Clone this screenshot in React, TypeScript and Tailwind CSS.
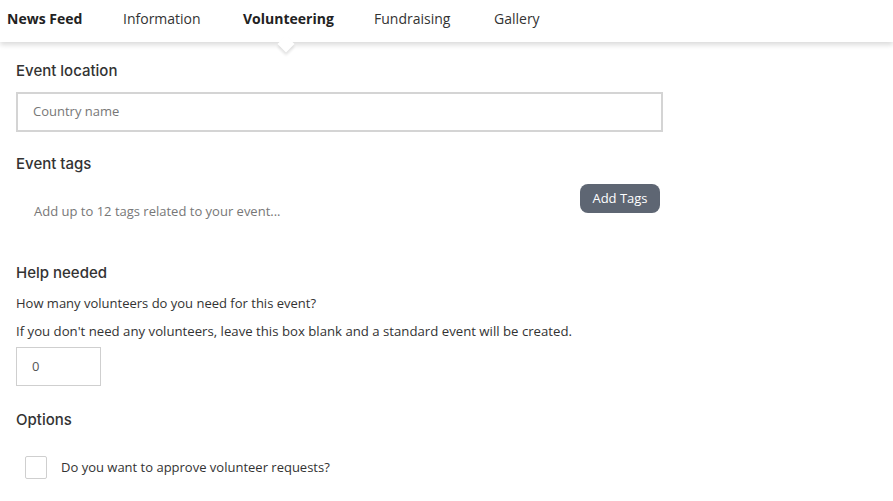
import React from "react";

const font = { fontFamily: '"Open Sans", "Liberation Sans", sans-serif' };

function Heading({ children, className = "" }: { children: React.ReactNode; className?: string }) {
  return (
    <div
      className={`text-[15px] font-medium text-[#333] leading-[18px] font-['Inter',sans-serif] ${className}`}
    >
      {children}
    </div>
  );
}

export default function App() {
  const tabs = [
    { label: "News Feed", bold: true, w: "w-[116px]" },
    { label: "Information", bold: false, w: "w-[120px]" },
    { label: "Volunteering", bold: true, w: "w-[131px]" },
    { label: "Fundraising", bold: false, w: "w-[120px]" },
    { label: "Gallery", bold: false, w: "w-[100px]" },
  ];
  return (
    <div className="w-[893px] h-[501px] bg-white overflow-hidden text-[#333]" style={font}>
      <div className="relative h-[42px] bg-white shadow-[0_3px_5px_rgba(0,0,0,0.14)] z-10">
        <div className="flex h-full items-center pl-[7px] pb-[6px]">
          {tabs.map((t) => (
            <div
              key={t.label}
              className={`${t.w} text-[14px] ${t.bold ? "font-bold text-[#222]" : "text-[#333]"}`}
            >
              {t.label}
            </div>
          ))}
        </div>
        <div className="absolute left-[280px] top-[38px] w-[12px] h-[12px] bg-white rotate-45 shadow-[2px_2px_3px_rgba(0,0,0,0.12)]" />
      </div>

      <div className="px-4 pt-[20px]">
        <Heading>Event location</Heading>
        <div className="mt-[12px] w-[647px] h-[40px] border-2 border-[#d4d4d4] flex items-center pl-[15px] text-[13px] text-[#777]">
          Country name
        </div>

        <Heading className="mt-[23px]">Event tags</Heading>
        <div className="relative w-[646px] h-[74px]">
          <div className="absolute left-[18px] top-[29px] text-[13px] text-[#777]">
            Add up to 12 tags related to your event...
          </div>
          <div className="absolute right-[2px] top-[11px] w-[80px] h-[29px] rounded-[8px] bg-[#5e6673] text-white text-[13px] flex items-center justify-center">
            Add Tags
          </div>
        </div>

        <Heading className="mt-[17px]">Help needed</Heading>
        <div className="mt-[12px] text-[13px] text-[#333] leading-[18px]">How many volunteers do you need for this event?</div>
        <div className="mt-[10px] text-[13.2px] text-[#333] leading-[18px]">
          If you don't need any volunteers, leave this box blank and a standard event will be created.
        </div>
        <div className="mt-[7px] w-[85px] h-[39px] border border-[#cfcfcf] flex items-center pl-[15px] text-[13px] text-[#555]">
          0
        </div>

        <Heading className="mt-[25px]">Options</Heading>
        <div className="mt-[27px] flex items-center pl-[9px]">
          <div className="w-[22px] h-[23px] border border-[#cfcfcf] rounded-[2px] bg-white" />
          <div className="ml-[14px] text-[13px] text-[#333]">Do you want to approve volunteer requests?</div>
        </div>
      </div>
    </div>
  );
}
